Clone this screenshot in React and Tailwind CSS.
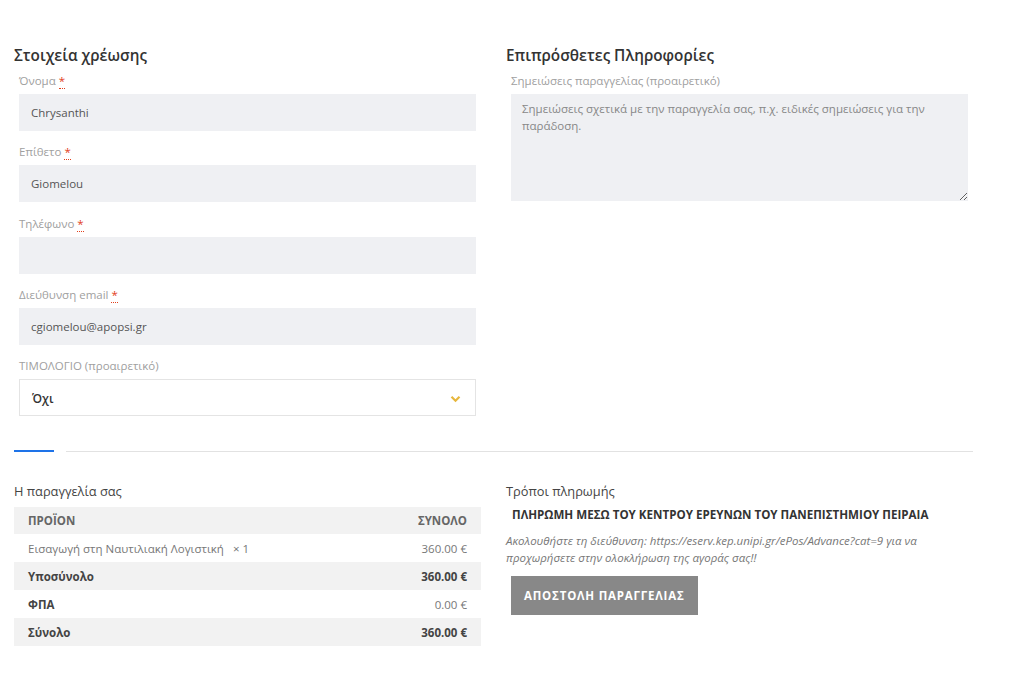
import React from 'react';

const font = { fontFamily: '"Open Sans", "Noto Sans", sans-serif' };

const Field = ({ label, value, required = true }) => (
  <div className="mb-[12.3px]">
    <label className="block px-[5px] text-[11.5px] leading-[18px] text-[#a0a0a0]">
      {label}{' '}
      {required && (
        <abbr className="text-[#e2401c] no-underline border-b border-dotted border-[#e2401c]" title="required">*</abbr>
      )}
    </label>
    <div className="px-[5px] mt-[4px]">
      <input
        type="text"
        defaultValue={value}
        className="w-full h-[37px] bg-[#eff0f3] px-[12px] text-[11.5px] text-[#555] outline-none"
        style={font}
      />
    </div>
  </div>
);

const Row = ({ left, right, grey, bold, muted }) => (
  <div className={`flex justify-between items-center h-[28px] px-[14px] text-[11.5px] ${grey ? 'bg-[#f2f2f2]' : 'bg-white'}`}>
    <span className={bold ? 'font-bold text-[#444]' : 'text-[#777]'}>{left}</span>
    <span className={bold && !muted ? 'font-bold text-[#444]' : 'text-[#777]'}>{right}</span>
  </div>
);

const App = () => {
  return (
    <div className="w-[1023px] min-h-[679px] bg-white pt-[44px] px-[14px]" style={font}>
      <div className="w-[959px]">
        <div className="grid grid-cols-2 gap-[25px]">
          <div>
            <h3 className="text-[15.3px] leading-[23px] font-semibold text-[#333] mb-[5px]">Στοιχεία χρέωσης</h3>
            <Field label="Όνομα" value="Chrysanthi" />
            <Field label="Επίθετο" value="Giomelou" />
            <Field label="Τηλέφωνο" value="" />
            <Field label="Διεύθυνση email" value="cgiomelou@apopsi.gr" />
            <div>
              <label className="block px-[5px] text-[11.5px] leading-[18px] text-[#a0a0a0]">ΤΙΜΟΛΟΓΙΟ (προαιρετικό)</label>
              <div className="px-[5px] mt-[4px]">
                <div className="flex items-center justify-between h-[37px] border border-[#e4e4e4] bg-white pl-[12px] pr-[14px] pt-[2px]">
                  <span className="text-[12px] font-semibold text-[#333]">Όχι</span>
                  <svg width="11" height="8" viewBox="0 0 11 8">
                    <path d="M1.5 1.8 L5.5 5.8 L9.5 1.8" fill="none" stroke="#e7b73d" strokeWidth="2.2" />
                  </svg>
                </div>
              </div>
            </div>
          </div>
          <div>
            <h3 className="text-[15.3px] leading-[23px] font-semibold text-[#333] mb-[5px]">Επιπρόσθετες Πληροφορίες</h3>
            <label className="block px-[5px] text-[11.5px] leading-[18px] text-[#a0a0a0]">Σημειώσεις παραγγελίας (προαιρετικό)</label>
            <div className="px-[5px] mt-[4px]">
              <textarea
                className="block w-full h-[107px] bg-[#eff0f3] px-[11px] pt-[6px] text-[11.5px] leading-[17px] text-[#555] placeholder:text-[#888] outline-none"
                style={font}
                placeholder="Σημειώσεις σχετικά με την παραγγελία σας, π.χ. ειδικές σημειώσεις για την παράδοση."
              />
            </div>
          </div>
        </div>

        <div className="flex items-center mt-[34px]">
          <div className="w-[40px] h-[2px] bg-[#1e73e8]" />
          <div className="flex-1 h-px bg-[#e2e2e2] ml-[12px]" />
        </div>

        <div className="grid grid-cols-2 gap-[25px] mt-[29px]">
          <div>
            <h3 className="text-[12.8px] leading-[20px] text-[#444] mb-[6px]">Η παραγγελία σας</h3>
            <div className="flex justify-between items-center h-[27px] px-[14px] text-[11.5px] bg-[#f2f2f2] font-bold text-[#666]">
              <span>ΠΡΟΪΟΝ</span>
              <span>ΣΥΝΟΛΟ</span>
            </div>
            <Row left={<>Εισαγωγή στη Ναυτιλιακή Λογιστική <span className="ml-[6px]">× 1</span></>} right="360.00 €" />
            <Row left="Υποσύνολο" right="360.00 €" grey bold />
            <Row left="ΦΠΑ" right="0.00 €" bold muted />
            <Row left="Σύνολο" right="360.00 €" grey bold />
          </div>
          <div>
            <h3 className="text-[12.8px] leading-[20px] text-[#444] mb-[5px]">Τρόποι πληρωμής</h3>
            <p className="px-[6px] text-[11.6px] leading-[18px] font-bold text-[#333]">
              ΠΛΗΡΩΜΗ ΜΕΣΩ ΤΟΥ ΚΕΝΤΡΟΥ ΕΡΕΥΝΩΝ ΤΟΥ ΠΑΝΕΠΙΣΤΗΜΙΟΥ ΠΕΙΡΑΙΑ
            </p>
            <p className="mt-[8px] text-[11.5px] leading-[17px] italic text-[#777]">
              Ακολουθήστε τη διεύθυνση: https://eserv.kep.unipi.gr/ePos/Advance?cat=9 για να<br />
              προχωρήσετε στην ολοκλήρωση της αγοράς σας!!
            </p>
            <div className="px-[5px] mt-[10px]">
              <button className="h-[39px] px-[13px] bg-[#888] text-white text-[11.5px] font-bold tracking-[0.8px]" style={font}>
                ΑΠΟΣΤΟΛΗ ΠΑΡΑΓΓΕΛΙΑΣ
              </button>
            </div>
          </div>
        </div>
      </div>
    </div>
  );
};

export default App;
